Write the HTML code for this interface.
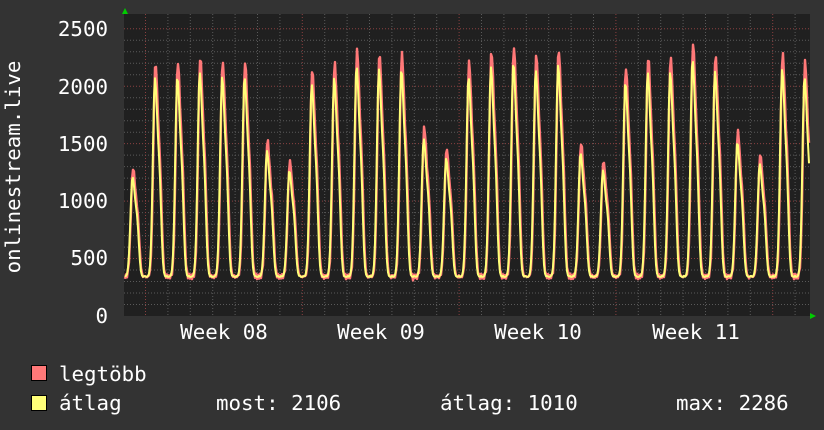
<!DOCTYPE html>
<html><head><meta charset="utf-8"><style>
html,body{margin:0;padding:0;background:#333;}
body{width:824px;height:430px;overflow:hidden;position:relative;font-family:"DejaVu Sans Mono","Liberation Mono",monospace;color:#fff;}
svg{position:absolute;left:0;top:0}
text{font-family:"DejaVu Sans Mono","Liberation Mono",monospace;fill:#fff;font-size:20.8px}
</style></head><body>
<svg id="g" width="824" height="430" xmlns="http://www.w3.org/2000/svg">
<rect x="0" y="0" width="824" height="430" fill="#333"/>
<rect x="124" y="14" width="686" height="302" fill="#202020"/>
<g id="grid"></g>
<path id="red" fill="none" stroke="#ff7878" stroke-width="2.4" stroke-linejoin="round"/>
<path id="yel" fill="none" stroke="#ffff78" stroke-width="2" stroke-linejoin="round"/>
<polygon points="122,14 128,14 125,8" fill="#0c0"/>
<polygon points="810,313 810,319 816,316" fill="#0c0"/>
<g text-anchor="end">
<text x="108" y="36">2500</text>
<text x="108" y="94">2000</text>
<text x="108" y="151">1500</text>
<text x="108" y="208">1000</text>
<text x="108" y="265">500</text>
<text x="108" y="323">0</text>
</g>
<text transform="translate(20,167) rotate(-90)" text-anchor="middle">onlinestream.live</text>
<g text-anchor="middle">
<text x="224" y="339">Week 08</text>
<text x="381" y="339">Week 09</text>
<text x="538" y="339">Week 10</text>
<text x="696" y="339">Week 11</text>
</g>
<rect x="31.5" y="365.5" width="15" height="15" fill="#ff7878" stroke="#000"/>
<rect x="31.5" y="395.5" width="15" height="15" fill="#ffff78" stroke="#000"/>
<text x="59" y="381">legtöbb</text>
<text x="59" y="410">átlag</text>
<text x="216" y="410">most: 2106</text>
<text x="440" y="410">átlag: 1010</text>
<text x="676" y="410">max: 2286</text>
</svg>
<script>
var g=document.getElementById("grid"),s="";
function Y(v){return 316-v*0.11488;}
for(var i=1;i<26;i++){var y=Y(i*100);var maj=i%5==0;
s+='<line x1="124" x2="810" y1="'+y+'" y2="'+y+'" stroke="'+(maj?'#8a4040':'#5a5a5a')+'" stroke-dasharray="1,2"/>';}
for(var k=-1;k<31;k++){var x=145.5+22.4*(k-1);if(x<124||x>810)continue;var maj=Math.round((x-145.5)/22.4)%7==0;
s+='<line y1="14" y2="316" x1="'+x+'" x2="'+x+'" stroke="'+(maj?'#8a4040':'#5a5a5a')+'" stroke-dasharray="1,2"/>';}
g.innerHTML=s;
var P=[1280,2190,2200,2240,2200,2200,1520,1340,2130,2190,2300,2270,2270,1630,1450,2200,2290,2330,2260,2310,1500,1340,2150,2240,2240,2360,2250,1600,1400,2270,2200];
function val(x,f){var d=(x-133)/22.4;var k=Math.round(d);
var r=340+10*Math.sin(x*1.7);
for(var j=k-1;j<=k+1;j++){if(j<0||j>30)continue;var dd=d-j;var pk=P[j]*f;
var w=dd<0?0.13:0.17;
var v=340+(pk-340)*Math.exp(-Math.pow(dd/w,2))+(pk*0.28)*Math.exp(-Math.pow((dd-0.22)/0.11,2));
if(dd>-0.5&&dd<0.5)r=Math.max(r,v);}
return Math.min(r,2400);}
var a="",b="";
for(var x=125;x<=809;x+=1){var v1=val(x,1)+20*Math.sin(x*3.1);var v2=val(x+0.5,0.94);
a+=(x==125?"M":"L")+x+","+Y(v1).toFixed(1);b+=(x==125?"M":"L")+x+","+Y(v2).toFixed(1);}
document.getElementById("red").setAttribute("d",a);
document.getElementById("yel").setAttribute("d",b);
</script>
</body></html>
